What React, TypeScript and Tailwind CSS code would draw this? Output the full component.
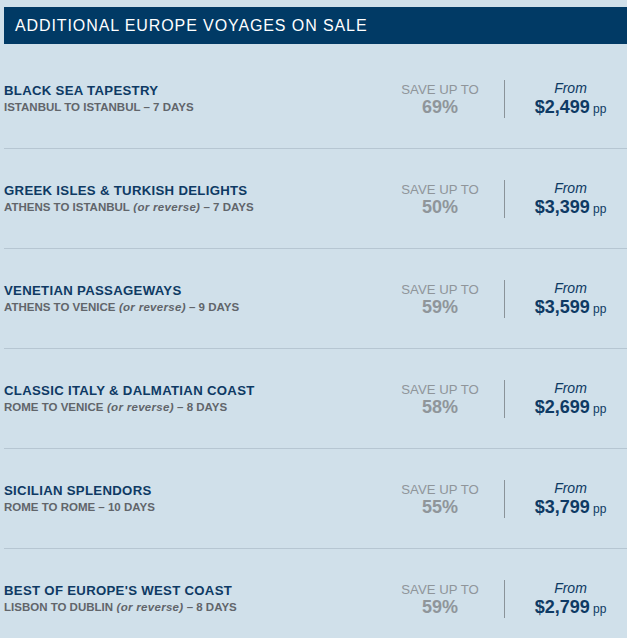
import React from 'react';

type Voyage = {
  name: string;
  from: string;
  reverse: boolean;
  days: number;
  save: number;
  price: string;
};

const voyages: Voyage[] = [
  { name: 'Black Sea Tapestry', from: 'Istanbul to Istanbul', reverse: false, days: 7, save: 69, price: '$2,499' },
  { name: 'Greek Isles & Turkish Delights', from: 'Athens to Istanbul', reverse: true, days: 7, save: 50, price: '$3,399' },
  { name: 'Venetian Passageways', from: 'Athens to Venice', reverse: true, days: 9, save: 59, price: '$3,599' },
  { name: 'Classic Italy & Dalmatian Coast', from: 'Rome to Venice', reverse: true, days: 8, save: 58, price: '$2,699' },
  { name: 'Sicilian Splendors', from: 'Rome to Rome', reverse: false, days: 10, save: 55, price: '$3,799' },
  { name: "Best of Europe's West Coast", from: 'Lisbon to Dublin', reverse: true, days: 8, save: 59, price: '$2,799' },
];

const VoyageRow: React.FC<{ v: Voyage }> = ({ v }) => (
  <div className="flex h-[100px] items-center border-b border-[#b6c6d2]">
    {/* name + route */}
    <div className="flex-1 min-w-0">
      <div className="text-[13.2px] leading-[17px] font-bold uppercase tracking-[0.3px] text-[#0e3a64]">
        {v.name}
      </div>
      <div className="text-[11.5px] leading-[17px] font-bold uppercase text-[#61656a]">
        {v.from}
        {v.reverse && <span className="normal-case italic font-bold tracking-[0.3px]"> (or reverse)</span>} – {v.days} Days
      </div>
    </div>

    {/* savings */}
    <div className="w-[128px] text-center text-[#8f959a]">
      <div className="text-[13.2px] leading-[17px]">SAVE UP TO</div>
      <div className="text-[18px] leading-[19px] font-bold">{v.save}%</div>
    </div>

    {/* price */}
    <div className="w-[132px] h-[38px] border-l border-[#8a9399] flex flex-col items-center justify-center pt-[2px] text-[#0e3a64]">
      <div className="text-[14px] leading-[17px] italic">From</div>
      <div className="leading-[20px] whitespace-nowrap">
        <span className="text-[18px] font-bold">{v.price}</span>
        <span className="text-[12px]"> pp</span>
      </div>
    </div>
  </div>
);

const App: React.FC = () => {
  return (
    <div
      className="w-[627px] h-[638px] overflow-hidden bg-[#d0e0ea]"
      style={{ fontFamily: '"Liberation Sans", Arial, sans-serif' }}
    >
      <div className="ml-[4px] w-[632px] pt-[7px]">
        <div className="h-[37px] bg-[#013a65] flex items-center pl-[11px]">
          <h1 className="text-[16px] tracking-[0.9px] text-white font-normal">
            ADDITIONAL EUROPE VOYAGES ON SALE
          </h1>
        </div>
        <div className="mt-[5px]">
          {voyages.map((v) => (
            <VoyageRow key={v.name} v={v} />
          ))}
        </div>
      </div>
    </div>
  );
};

export default App;
